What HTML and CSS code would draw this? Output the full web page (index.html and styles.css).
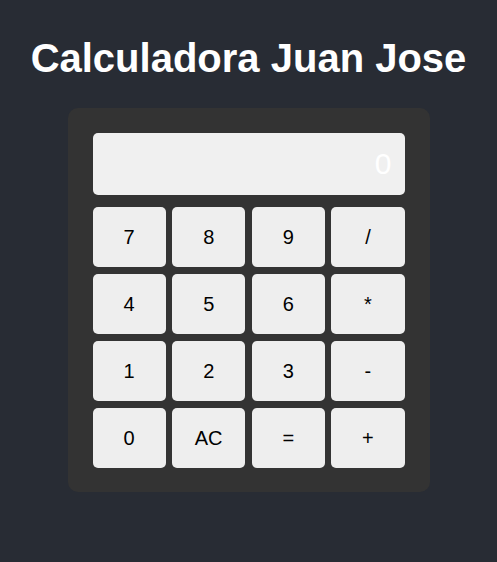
FILE: index.html
```html
<!DOCTYPE html>
<html lang="es">
<head>
<meta charset="utf-8">
<title>Calculadora Juan Jose</title>
<link rel="stylesheet" href="styles.css">
</head>
<body>
<main class="app">
  <h1 class="title">Calculadora Juan Jose</h1>
  <div class="calculator">
    <div class="display">0</div>
    <div class="keys">
      <button class="key">7</button>
      <button class="key">8</button>
      <button class="key">9</button>
      <button class="key">/</button>
      <button class="key">4</button>
      <button class="key">5</button>
      <button class="key">6</button>
      <button class="key">*</button>
      <button class="key">1</button>
      <button class="key">2</button>
      <button class="key">3</button>
      <button class="key">-</button>
      <button class="key">0</button>
      <button class="key">AC</button>
      <button class="key">=</button>
      <button class="key">+</button>
    </div>
  </div>
</main>
</body>
</html>
```
FILE: styles.css
```css
html, body {
  margin: 0;
  padding: 0;
  background: #282c34;
  font-family: "Liberation Sans", Arial, sans-serif;
}

.app {
  display: flex;
  flex-direction: column;
  align-items: center;
  padding-top: 35px;
}

.title {
  margin: 0 0 27px;
  color: #ffffff;
  font-size: 40px;
  font-weight: bold;
  line-height: 46px;
}

.calculator {
  width: 312px;
  padding: 25px 25px 24px;
  background: #333333;
  border-radius: 10px;
  display: flex;
  flex-direction: column;
  gap: 12px;
}

.display {
  height: 62px;
  box-sizing: border-box;
  background: #f0f0f0;
  border-radius: 5px;
  color: #ffffff;
  font-size: 30px;
  text-align: right;
  padding: 0 13px;
  line-height: 62px;
}

.keys {
  display: grid;
  grid-template-columns: repeat(4, 1fr);
  column-gap: 6.5px;
  row-gap: 7px;
}

.key {
  height: 60px;
  border: none;
  border-radius: 5px;
  background: #eeeeee;
  color: #000000;
  font-family: "Liberation Sans", Arial, sans-serif;
  font-size: 20px;
  padding: 0;
}
```
